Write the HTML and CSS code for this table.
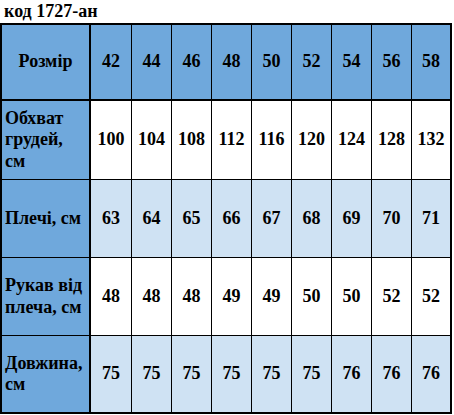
FILE: index.html
```html
<!DOCTYPE html>
<html lang="uk">
<head>
<meta charset="utf-8">
<title>код 1727-ан</title>
<link rel="stylesheet" href="styles.css">
</head>
<body>
<div class="title">код 1727-ан</div>
<div class="table">
  <div class="cell head label center">Розмір</div>
  <div class="cell head">42</div>
  <div class="cell head">44</div>
  <div class="cell head">46</div>
  <div class="cell head">48</div>
  <div class="cell head">50</div>
  <div class="cell head">52</div>
  <div class="cell head">54</div>
  <div class="cell head">56</div>
  <div class="cell head last-col">58</div>

  <div class="cell label row-a">Обхват<br>грудей,<br>см</div>
  <div class="cell white row-a">100</div>
  <div class="cell white row-a">104</div>
  <div class="cell white row-a">108</div>
  <div class="cell white row-a">112</div>
  <div class="cell white row-a">116</div>
  <div class="cell white row-a">120</div>
  <div class="cell white row-a">124</div>
  <div class="cell white row-a">128</div>
  <div class="cell white row-a last-col">132</div>

  <div class="cell label row-b">Плечі, см</div>
  <div class="cell light row-b">63</div>
  <div class="cell light row-b">64</div>
  <div class="cell light row-b">65</div>
  <div class="cell light row-b">66</div>
  <div class="cell light row-b">67</div>
  <div class="cell light row-b">68</div>
  <div class="cell light row-b">69</div>
  <div class="cell light row-b">70</div>
  <div class="cell light row-b last-col">71</div>

  <div class="cell label row-b">Рукав від<br>плеча, см</div>
  <div class="cell white row-b">48</div>
  <div class="cell white row-b">48</div>
  <div class="cell white row-b">48</div>
  <div class="cell white row-b">49</div>
  <div class="cell white row-b">49</div>
  <div class="cell white row-b">50</div>
  <div class="cell white row-b">50</div>
  <div class="cell white row-b">52</div>
  <div class="cell white row-b last-col">52</div>

  <div class="cell label last-row">Довжина,<br>см</div>
  <div class="cell light last-row">75</div>
  <div class="cell light last-row">75</div>
  <div class="cell light last-row">75</div>
  <div class="cell light last-row">75</div>
  <div class="cell light last-row">75</div>
  <div class="cell light last-row">75</div>
  <div class="cell light last-row">76</div>
  <div class="cell light last-row">76</div>
  <div class="cell light last-row last-col">76</div>
</div>
</body>
</html>
```
FILE: styles.css
```css
html, body {
  margin: 0;
  padding: 0;
  background: #ffffff;
}

body {
  font-family: "Liberation Serif", "DejaVu Serif", serif;
  font-weight: 700;
  color: #000000;
  font-size: 18px;
}

.title {
  height: 23px;
  line-height: 22px;
  padding-left: 4px;
  font-family: "Liberation Serif", "DejaVu Serif", serif;
  font-size: 18px;
  font-weight: 700;
}

.table {
  display: grid;
  width: 448px;
  grid-template-columns: 89px 41px repeat(7, 40px) 38px;
  grid-template-rows: 76px 79px 78px 78px 76px;
  border: 2px solid #000000;
}

.cell {
  box-sizing: border-box;
  display: flex;
  align-items: center;
  justify-content: center;
  border-right: 1px solid #000000;
  border-bottom: 1px solid #000000;
  line-height: 21.5px;
  background: #ffffff;
  font-family: "Liberation Serif", "DejaVu Serif", serif;
}

.head {
  background: #6fa8dc;
  border-bottom-width: 2px;
}

.label {
  background: #6fa8dc;
  justify-content: flex-start;
  padding-left: 3px;
  border-right-width: 2px;
}

.label.center {
  justify-content: center;
  padding-left: 0;
}

.white {
  background: #ffffff;
}

.light {
  background: #cfe2f3;
}

.last-col {
  border-right: none;
}

.last-row {
  border-bottom: none;
}
```
